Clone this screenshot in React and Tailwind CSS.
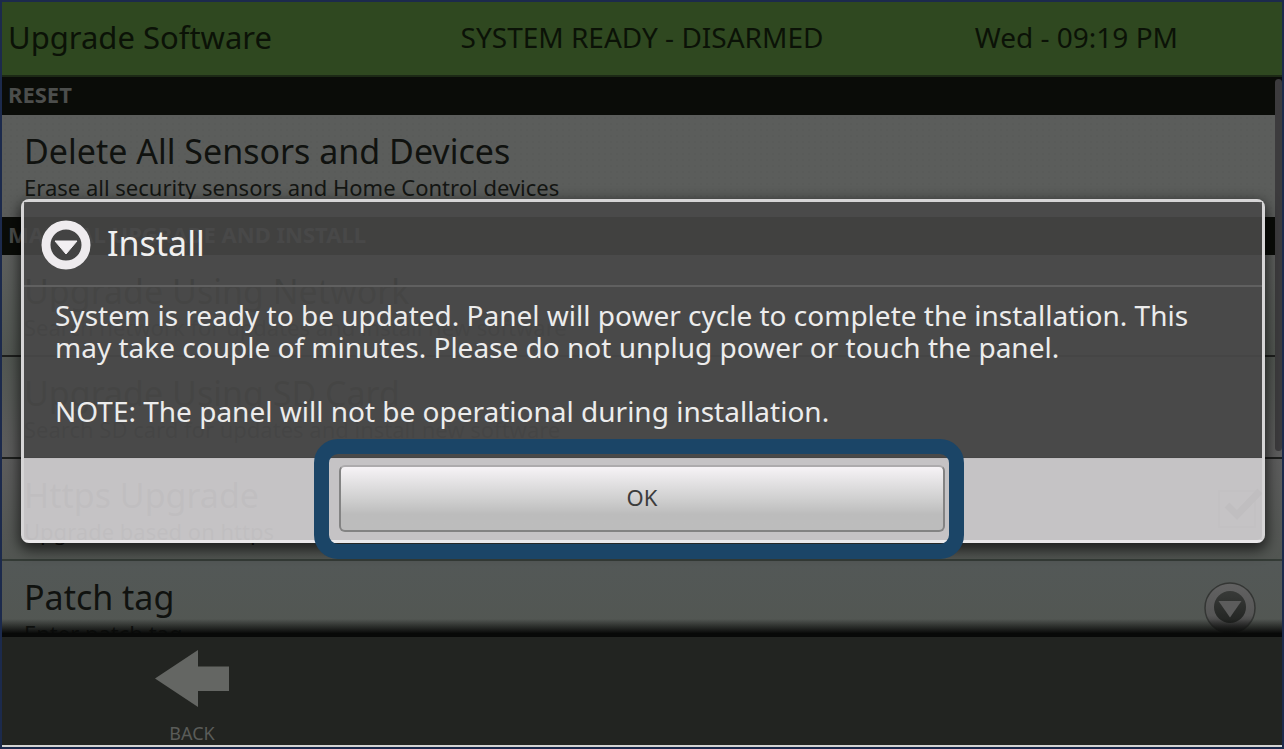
import React from "react";

function SectionHeading({ children }) {
  return (
    <h2 className="flex h-[38px] shrink-0 items-center bg-[#0a0c08] px-1.5 pb-1 text-[22px] leading-7 font-bold text-[#4c4e4c]">
      {children}
    </h2>
  );
}

function SettingRow({ id, title, detail, className, children }) {
  return (
    <div className={`flex h-[102px] shrink-0 items-center justify-between pr-[26px] pl-[22px] ${className}`}>
      <div className="flex h-full flex-col pt-4">
        <label htmlFor={id} className="text-[34px] leading-10 text-[#10120f]">
          {title}
        </label>
        <p className="mt-0.5 text-[22px] leading-7 text-[#141613]">{detail}</p>
      </div>
      {children}
    </div>
  );
}

function BackArrow() {
  return (
    <svg viewBox="0 0 74 57" className="h-[57px] w-[74px] shrink-0" aria-hidden="true">
      <path d="M0 28.5 43 0V16.5H74V41H43V57Z" fill="#646663" />
    </svg>
  );
}

function OpenBadge() {
  return (
    <svg viewBox="0 0 52 52" className="size-[52px]" aria-hidden="true">
      <defs>
        <linearGradient id="badgeRing" x1="0" y1="0" x2="0" y2="1">
          <stop offset="0" stopColor="#626262" />
          <stop offset="0.65" stopColor="#565656" />
          <stop offset="1" stopColor="#2c2c2c" />
        </linearGradient>
        <linearGradient id="badgeCore" x1="0" y1="0" x2="0" y2="1">
          <stop offset="0" stopColor="#383a38" />
          <stop offset="1" stopColor="#222422" />
        </linearGradient>
      </defs>
      <circle cx="26" cy="26" r="25" fill="url(#badgeRing)" stroke="#343634" strokeWidth="1.5" />
      <circle cx="26" cy="25" r="16" fill="url(#badgeCore)" />
      <path d="M14.5 19H37.5L26 35.5Z" fill="#5c5c5c" />
    </svg>
  );
}

function DialogBadge() {
  return (
    <svg viewBox="0 0 50 50" className="size-[50px] shrink-0" aria-hidden="true">
      <circle cx="25" cy="25" r="20" fill="#434343" stroke="#eeebee" strokeWidth="9" />
      <path d="M14 21H36L25 34Z" fill="#f2eff2" stroke="#f2eff2" strokeWidth="1" strokeLinejoin="round" />
    </svg>
  );
}

export default function App() {
  return (
    <div className="relative flex h-screen flex-col overflow-hidden border-2 border-[#1c2a4c] bg-[#222421] font-['Noto_Sans',sans-serif]">
      <header className="grid h-[75px] shrink-0 grid-cols-[1fr_auto_1fr] items-center border-b-2 border-[#1c2915] bg-[#2f4820] px-1.5 pb-1 text-[#0b1207]">
        <h1 className="text-[31px] leading-10">Upgrade Software</h1>
        <p className="text-[28px] leading-10">SYSTEM READY - DISARMED</p>
        <time className="justify-self-end pr-[98px] text-[28px] leading-10">Wed - 09:19 PM</time>
      </header>

      <main className="relative flex min-h-0 flex-1 flex-col overflow-hidden bg-[#555955]">
        <SectionHeading>RESET</SectionHeading>
        <SettingRow
          id="delete-all"
          title="Delete All Sensors and Devices"
          detail="Erase all security sensors and Home Control devices"
          className="bg-[#5b5d5b] bg-[radial-gradient(#595b59_1px,transparent_1px)] bg-size-[6px_6px]"
        />
        <SectionHeading>MANUAL UPGRADE AND INSTALL</SectionHeading>
        <SettingRow
          id="network"
          title="Upgrade Using Network"
          detail="Search network for updates and install new software"
          className="border-b-2 border-[#1d1f1d] bg-linear-to-b from-[#5d5f5d] to-[#525752]"
        />
        <SettingRow
          id="sd-card"
          title="Upgrade Using SD Card"
          detail="Search SD card for updates and install new software"
          className="border-b-2 border-[#1d1f1d] bg-linear-to-b from-[#525752] to-[#5d5d5d]"
        />
        <SettingRow
          id="https"
          title="Https Upgrade"
          detail="Upgrade based on https"
          className="border-b-2 border-[#343b36] bg-linear-to-b from-[#5d5d5d] to-[#525652]"
        >
          <span className="relative size-[38px]">
            <input
              id="https"
              type="checkbox"
              defaultChecked
              className="block size-[38px] appearance-none border-2 border-[#3a3c3a]"
            />
            <svg viewBox="0 0 38 38" className="pointer-events-none absolute inset-0 size-[38px] overflow-visible" aria-hidden="true">
              <path d="M9 15 19 25 42 1" fill="none" stroke="#101210" strokeWidth="7" />
            </svg>
          </span>
        </SettingRow>
        <SettingRow
          id="patch-tag"
          title="Patch tag"
          detail="Enter patch tag"
          className="bg-linear-to-b from-[#535857] to-[#525650]"
        >
          <button id="patch-tag" type="button" aria-label="Edit patch tag" className="mb-2 rounded-full">
            <OpenBadge />
          </button>
        </SettingRow>
        <div className="absolute top-0.5 right-0 h-[372px] w-[7px] rounded-sm bg-[#3c3b3d]" />
        <div className="absolute inset-x-0 bottom-0 h-[18px] bg-linear-to-b from-transparent to-[#080908] to-80%" />
      </main>

      <footer className="flex h-[110px] shrink-0 items-start border-b-2 border-[#d4d4d2] bg-[#222421] pt-[13px] pl-[153px]">
        <button type="button" className="flex flex-col items-center gap-3.5 text-lg leading-6 text-[#5a5c59]">
          <BackArrow />
          BACK
        </button>
      </footer>

      <div className="absolute inset-0 flex items-center pr-[17px] pb-2 pl-[19px]">
        <section
          role="dialog"
          aria-labelledby="dialog-title"
          className="w-full rounded-lg border-3 border-[#d6d5d6] border-b-[#ebe9eb] shadow-[0_5px_14px_2px_rgba(0,0,0,0.65)]"
        >
          <div className="flex h-[85px] items-center gap-4 border-b-2 border-[#606060] bg-[rgba(72,72,72,0.89)] pt-1 pl-[17px] text-[#f0f0f0]">
            <DialogBadge />
            <h2 id="dialog-title" className="pb-1 text-[34px] leading-10">
              Install
            </h2>
          </div>
          <div className="h-[171px] bg-[rgba(72,72,72,0.94)] pt-3 pr-10 pl-[31px] text-[28px] leading-8 text-[#ececec]">
            <p>
              System is ready to be updated. Panel will power cycle to complete the installation. This may take couple
              of minutes. Please do not unplug power or touch the panel.
            </p>
            <p className="mt-8">NOTE: The panel will not be operational during installation.</p>
          </div>
          <div className="flex h-[82px] justify-center bg-[rgba(206,203,206,0.93)] pt-[7px]">
            <div className="relative mr-0.5 h-[67px] w-[49%]">
              <button
                type="button"
                className="size-full rounded-md border-2 border-[#838383] border-t-[#adabad] bg-linear-to-b from-[#f6f3f6] via-[#d0d0d0] to-[#bcbcbc] to-75% pb-0.5 text-[22px] leading-7 text-[#3c3c3c]"
              >
                OK
              </button>
              <span className="pointer-events-none absolute -top-[26px] -right-[19px] -bottom-[27px] -left-[25px] rounded-3xl border-15 border-[#1b4567]" />
            </div>
          </div>
        </section>
      </div>
    </div>
  );
}
